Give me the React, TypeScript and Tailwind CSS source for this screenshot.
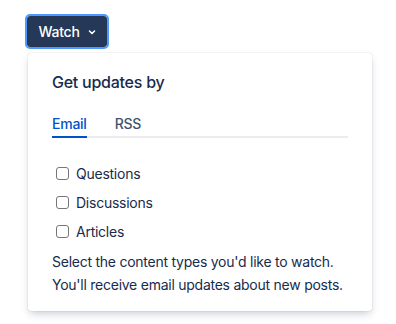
import { useState } from "react";

const TYPES = ["Questions", "Discussions", "Articles"];

function Chevron() {
  return (
    <svg width="10" height="10" viewBox="0 0 10 10" aria-hidden>
      <path d="M2.5 4 L5 6.5 L7.5 4" fill="none" stroke="currentColor" strokeWidth="1.6" strokeLinecap="round" strokeLinejoin="round" />
    </svg>
  );
}

export default function App() {
  const [tab, setTab] = useState<"email" | "rss">("email");
  const [checked, setChecked] = useState<Record<string, boolean>>({});

  return (
    <div className="min-h-screen bg-white pl-[27px] pt-[16px] font-['Inter',sans-serif] tracking-[-0.25px] text-[#172b4d]">
      <button className="flex h-[31px] w-[80px] items-center justify-center gap-[7px] rounded-[3px] bg-[#253858] pl-[1px] text-[14px] font-medium text-white outline-2 outline-[#4c9aff] outline-solid">
        Watch
        <Chevron />
      </button>

      <div className="mt-[6px] ml-[1px] w-[344px] rounded-[3px] bg-white px-[24px] pt-[19px] pb-[15px] shadow-[0_4px_8px_-2px_rgba(9,30,66,0.25),0_0_1px_rgba(9,30,66,0.31)]">
        <h2 className="text-[16px] leading-[20px] font-medium">Get updates by</h2>

        <div className="mt-[22px] flex gap-[28px] border-b-2 border-[#ebecf0]">
          {(["email", "rss"] as const).map((t) => (
            <button
              key={t}
              onClick={() => setTab(t)}
              className={
                "-mb-[2px] border-b-2 pb-[2px] text-[14px] leading-[20px] font-medium " +
                (tab === t ? "border-[#0052cc] text-[#0052cc]" : "border-transparent text-[#42526e]")
              }
            >
              {t === "email" ? "Email" : "RSS"}
            </button>
          ))}
        </div>

        <div className="mt-[25px] flex flex-col gap-[9px] pl-[4px]">
          {TYPES.map((name) => (
            <label key={name} className="flex h-[20px] cursor-pointer items-center gap-[7px] text-[14px]">
              <input
                type="checkbox"
                checked={!!checked[name]}
                onChange={() => setChecked((c) => ({ ...c, [name]: !c[name] }))}
                className="peer sr-only"
              />
              <span className="h-[13px] w-[13px] rounded-[3px] border border-[#767676] bg-white peer-checked:bg-[#0052cc]" />
              {name}
            </label>
          ))}
        </div>

        <p className="mt-[9px] text-[14px] leading-[23px]">
          Select the content types you'd like to watch.
          <br />
          You'll receive email updates about new posts.
        </p>
      </div>
    </div>
  );
}
